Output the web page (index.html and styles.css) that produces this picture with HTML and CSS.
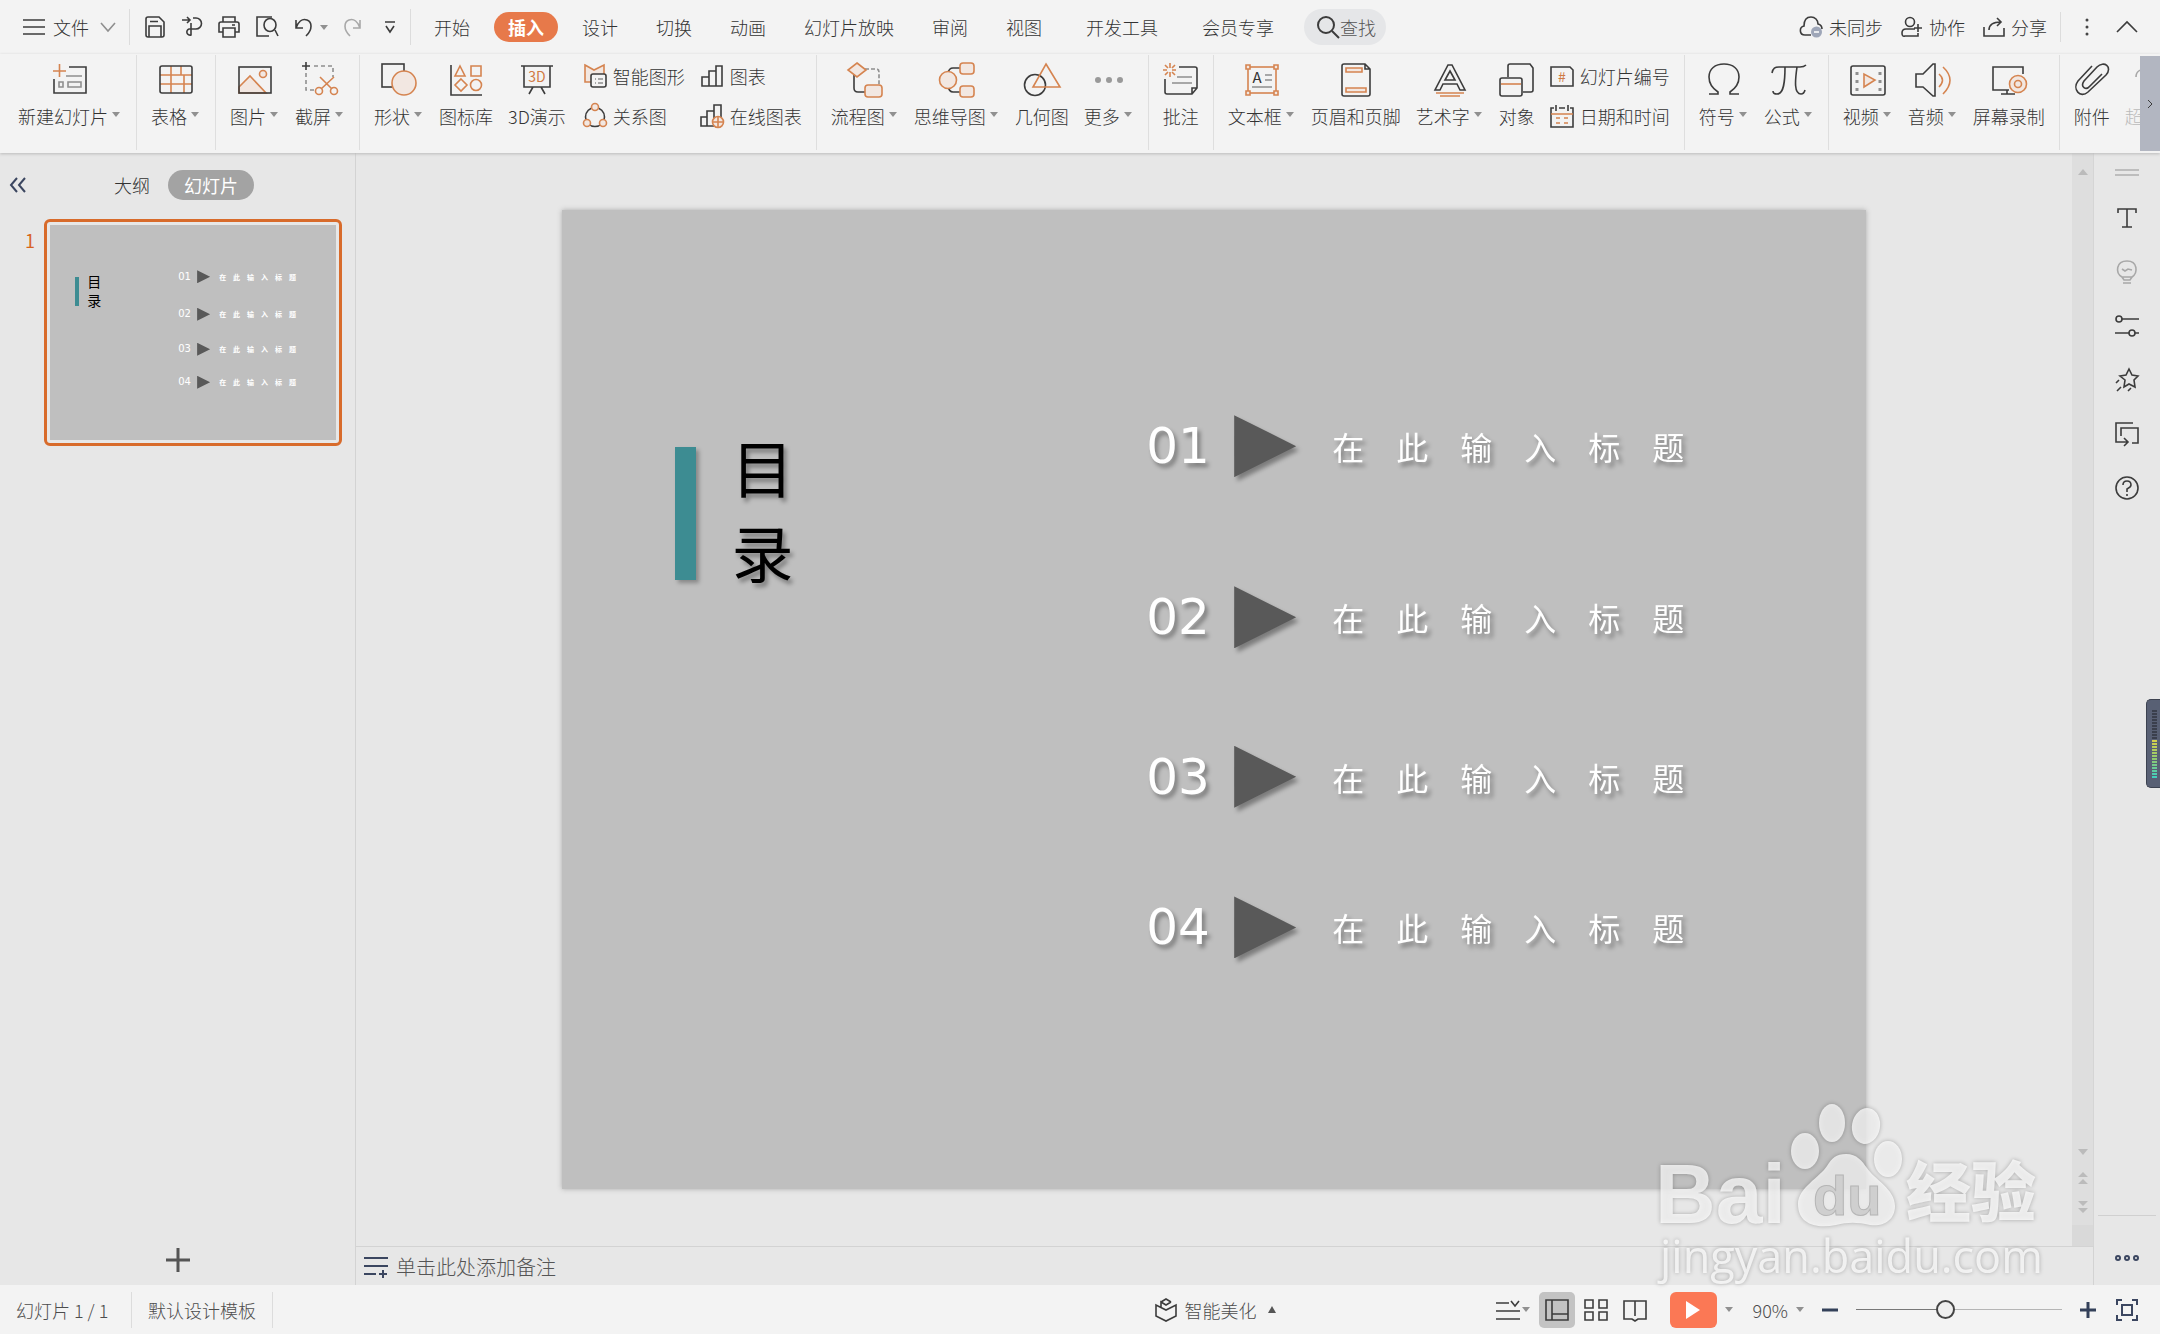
FILE: index.html
```html
<!DOCTYPE html>
<html lang="zh-CN">
<head>
<meta charset="utf-8">
<title>演示文稿</title>
<link rel="stylesheet" href="styles.css">
</head>
<body>
<div class="app">
  <header class="topbar">
    <button class="plain file-menu"><svg width="22" height="18" viewBox="0 0 22 18"><path class="k" d="M0 2H22M0 9H22M0 16H22"/></svg>文件</button>
    <button class="plain file-more" aria-label="更多菜单"><svg width="14" height="10" viewBox="0 0 14 10"><path class="g" d="M0 1 7 9 14 1"/></svg></button>
    <span class="divider"></span>
    <div class="quick">
      <button class="plain" aria-label="保存"><svg width="22" height="22" viewBox="0 0 22 22"><path class="k" d="M4 1H15L20 6V19Q20 21 18 21H4Q2 21 2 19V3Q2 1 4 1ZM5 21V10H17V21M6 5.500H14"/></svg></button>
      <button class="plain" aria-label="输出为PDF"><svg width="22" height="22" viewBox="0 0 22 22"><path class="k" d="M1 4H9M6 1 9 4 6 7M12 2H15A5.500 5.500 0 0 1 15 13H8A3 3 0 1 0 10 19V7"/></svg></button>
      <button class="plain" aria-label="打印"><svg width="22" height="22" viewBox="0 0 22 22"><path class="k" d="M5 6V1H17V6M5 16H1V8Q1 6 3 6H19Q21 6 21 8V16H17M5 12H17V21H5ZM14 9H17"/></svg></button>
      <button class="plain" aria-label="打印预览"><svg width="24" height="22" viewBox="0 0 24 22"><path class="k" d="M14 20H2V1H17M20 14 23 20"/><ellipse class="k" cx="15" cy="9" rx="6" ry="6.500"/></svg></button>
    </div>
    <div class="history">
      <button class="plain undo" aria-label="撤销"><svg width="20" height="20" viewBox="0 0 20 20"><path class="k" d="M2 3V11H9M2 11C4 5 8 1 13 3S19 12 12 19"/></svg><i class="caret"></i></button>
      <button class="plain" aria-label="恢复" disabled><svg width="20" height="20" viewBox="0 0 20 20"><path class="l" d="M18 3V11H11M18 11C16 5 12 1 7 3S1 12 8 19"/></svg></button>
      <button class="plain" aria-label="自定义快速访问"><svg width="12" height="12" viewBox="0 0 12 12"><path class="k" d="M1 1H11M2 5 6 11 10 5"/></svg></button>
    </div>
    <span class="divider"></span>
    <nav class="tabs">
      <button class="tab">开始</button><button class="tab tab-active">插入</button><button class="tab">设计</button><button class="tab">切换</button><button class="tab">动画</button><button class="tab">幻灯片放映</button><button class="tab">审阅</button><button class="tab">视图</button><button class="tab tab-extra">开发工具</button><button class="tab tab-extra">会员专享</button>
    </nav>
    <button class="find"><svg width="24" height="24" viewBox="0 0 24 24"><circle class="k2" cx="10" cy="10" r="8"/><path class="k2" d="M16 16 23 23"/></svg>查找</button>
    <div class="account">
      <button class="plain"><svg width="24" height="24" viewBox="0 0 24 24"><path class="k" d="M12 20H6C0 20 0 12 5 11C5 5 8 2 12 2S19 5 19 9Q23 10 23 14"/><circle cx="17.500" cy="17" r="5.500" fill="#9ea6b8"/><path stroke="#fff" stroke-width="1.500" d="M15 17H20"/></svg>未同步</button>
      <button class="plain"><svg width="22" height="22" viewBox="0 0 22 22"><circle class="k" cx="9" cy="6" r="4.500"/><path class="k" d="M14 13H5Q1 13 1 17T4 20H17V17M13 12H21M17 8V16"/></svg>协作</button>
      <button class="plain"><svg width="22" height="22" viewBox="0 0 22 22"><path class="k" d="M1 11V20H21V12M6 14C6 9 10 6 18 6M14 2 18 6 14 10"/></svg>分享</button>
    </div>
    <span class="divider divider-short"></span>
    <button class="plain dots" aria-label="选项"><svg width="4" height="20" viewBox="0 0 4 20"><g fill="#444"><circle cx="2" cy="3" r="1.500"/><circle cx="2" cy="10" r="1.500"/><circle cx="2" cy="17" r="1.500"/></g></svg></button>
    <button class="plain fold" aria-label="折叠功能区"><svg width="22" height="12" viewBox="0 0 22 12"><path class="k" d="M1 11 11 1 21 11"/></svg></button>
  </header>

  <div class="ribbon">
    <div class="groups">
      <div class="group">
        <button class="tool"><svg viewBox="0 0 36 36"><path class="o" d="M1 10H14M7.500 3V16"/><path class="k" d="M17 6H34V32H2V18"/><path class="g" d="M14 15H30M7 21H11V26H7ZM16 21H29V26H16Z"/></svg><span>新建幻灯片<i class="caret"></i></span></button>
      </div>
      <div class="group">
        <button class="tool"><svg viewBox="0 0 36 36"><path class="o" d="M2 14H34M2 23H34M13 5V32M23 5V14M26 14V32"/><rect class="k" x="2" y="5" width="32" height="27" rx="2"/></svg><span>表格<i class="caret"></i></span></button>
      </div>
      <div class="group">
        <button class="tool"><svg viewBox="0 0 36 36"><path class="of" d="M2 26 13 15 29 32H2Z"/><circle class="of" cx="26" cy="13" r="3.500"/><rect class="k" x="2" y="6" width="32" height="26"/></svg><span>图片<i class="caret"></i></span></button>
        <button class="tool"><svg viewBox="0 0 36 36"><path class="g" stroke-dasharray="4 3" d="M4 12V29H12M12 5H31V16"/><path class="k" d="M0 5H8M4 1V9"/><path class="o" d="M18 16 30 28M32 16 19 28"/><circle class="o" cx="17" cy="30" r="3.500"/><circle class="o" cx="32" cy="30" r="3.500"/></svg><span>截屏<i class="caret"></i></span></button>
      </div>
      <div class="group">
        <button class="tool"><svg viewBox="0 0 36 36"><rect class="k" x="1" y="3" width="22" height="23"/><circle class="of" cx="23" cy="22" r="12"/></svg><span>形状<i class="caret"></i></span></button>
        <button class="tool"><svg viewBox="0 0 36 36"><path class="k" d="M3 4V34H34"/><path class="o" d="M12 5 17 15H7ZM23 5H33V15H23ZM13 18 19 24 13 30 7 24Z"/><circle class="o" cx="28" cy="24" r="5.500"/></svg><span>图标库</span></button>
        <button class="tool"><svg viewBox="0 0 36 36"><path class="k" d="M2 5H34M5 5V26H31V5M14 26 10 33M22 26 26 33"/><text class="o-text" x="18" y="21" text-anchor="middle" font-size="14">3D</text></svg><span>3D演示</span></button>
        <div class="stack">
          <button class="mini"><svg viewBox="0 0 24 26"><path class="of" d="M2 2 11 7 21 2V19H2Z"/><rect class="kf" x="8" y="11" width="15" height="13" rx="2"/><path class="g" d="M12 16H13M15 16H20M12 20H13M15 20H20"/></svg>智能图形</button>
          <button class="mini"><svg viewBox="0 0 24 26"><circle class="k" cx="12" cy="14" r="9.500"/><circle class="of" cx="12" cy="4" r="3.500"/><circle class="of" cx="4" cy="20" r="3.500"/><circle class="of" cx="20" cy="20" r="3.500"/></svg>关系图</button>
        </div>
        <div class="stack">
          <button class="mini"><svg viewBox="0 0 24 26"><path class="k" d="M2 23V14H9V23ZM9 23V8H16V23ZM16 23V3H22V23Z"/></svg>图表</button>
          <button class="mini"><svg viewBox="0 0 24 26"><path class="k" d="M1 23V14H7V23ZM7 23V8H14V23ZM14 14V2H21V14"/><circle class="of" cx="18" cy="19" r="5.500"/><path class="o" d="M12 19H24M18 13V25"/></svg>在线图表</button>
        </div>
      </div>
      <div class="group">
        <button class="tool"><svg viewBox="0 0 36 36"><path class="k" d="M7 14V27Q7 31 11 31H19"/><path class="g" stroke-dasharray="4 2" d="M18 8H29Q32 8 32 11V24"/><path class="of" d="M10 2 19 9 10 16 1 9Z"/><rect class="of" x="18" y="24" width="17" height="12" rx="3"/></svg><span>流程图<i class="caret"></i></span></button>
        <button class="tool"><svg viewBox="0 0 36 36"><path class="k" d="M9 12Q10 7 14 7H22M9 25Q10 31 14 31H22"/><circle class="of" cx="9" cy="19" r="8.500"/><rect class="of" x="21" y="2" width="14" height="11" rx="3"/><rect class="of" x="21" y="25" width="14" height="11" rx="3"/></svg><span>思维导图<i class="caret"></i></span></button>
        <button class="tool"><svg viewBox="0 0 36 36"><circle class="k" cx="11" cy="24" r="10.500"/><path class="o" d="M22 3 36 26H9Z"/></svg><span>几何图</span></button>
        <button class="tool"><svg viewBox="0 0 36 36"><g fill="#999"><circle cx="7" cy="19" r="3"/><circle cx="18" cy="19" r="3"/><circle cx="29" cy="19" r="3"/></g></svg><span>更多<i class="caret"></i></span></button>
      </div>
      <div class="group">
        <button class="tool"><svg viewBox="0 0 36 36"><path class="o" d="M0 9H4M9 9H13M7 2V7M7 11V16M2 4 5 7M12 4 9 7M2 14 5 11M12 14 9 11"/><path class="k" d="M16 6H32Q34 6 34 8V27L29 33H4Q2 33 2 31V18M34 27H29V33"/><path class="g" d="M14 16H29M9 22H29"/></svg><span>批注</span></button>
      </div>
      <div class="group">
        <button class="tool"><svg viewBox="0 0 36 36"><rect class="o" x="4" y="6" width="28" height="26"/><path class="of" d="M2 4H6V8H2ZM30 4H34V8H30ZM2 30H6V34H2ZM30 30H34V34H30Z"/><text class="k-text" x="13" y="22" text-anchor="middle" font-size="15">A</text><path class="g" d="M21 14H28M21 19H28M8 26H28"/></svg><span>文本框<i class="caret"></i></span></button>
        <button class="tool"><svg viewBox="0 0 36 36"><path class="k" d="M6 3H27L32 8V33Q32 35 30 35H6Q4 35 4 33V5Q4 3 6 3ZM27 3V8H32"/><path class="of" d="M8 7H24V11H8ZM8 27H28V31H8Z"/></svg><span>页眉和页脚</span></button>
        <button class="tool"><svg viewBox="0 0 36 36"><path class="k" d="M16 4H20L33 29H28L25 23H11L8 29H3ZM18 10 23 19H13Z"/><path class="o" d="M4 32H32M8 35H28"/></svg><span>艺术字<i class="caret"></i></span></button>
        <button class="tool"><svg viewBox="0 0 36 36"><path class="k" d="M9 16V5Q9 3 11 3H31L34 7V29Q34 31 32 31H24"/><rect class="k" x="1" y="17" width="22" height="18" rx="2"/><path class="o" d="M2 23H22"/></svg><span>对象</span></button>
        <div class="stack">
          <button class="mini"><svg viewBox="0 0 24 26"><path class="k" d="M2 4H20L23 7V23H1V4Z"/><text class="o-text" x="12" y="19" text-anchor="middle" font-size="14">#</text></svg>幻灯片编号</button>
          <button class="mini"><svg viewBox="0 0 24 26"><path class="k" d="M4 5H1V24H23V5H20M9 5H15M6 2V8M18 2V8"/><path class="o" d="M1 11H23M6 15H10M14 15H18M6 20H10M14 20H18"/></svg>日期和时间</button>
        </div>
      </div>
      <div class="group">
        <button class="tool"><svg viewBox="0 0 36 36"><path class="k" d="M3 33H12V31C6 27 3 22 3 16C3 8 9 3 18 3S33 8 33 16C33 22 30 27 24 31V33H33"/></svg><span>符号<i class="caret"></i></span></button>
        <button class="tool"><svg viewBox="0 0 36 36"><path class="k" d="M1 12C2 7 4 6 8 6H29Q33 6 35 4M14 6C14 20 13 33 6 33Q2 33 2 30M26 6C24 20 23 33 30 33Q33 33 34 29"/></svg><span>公式<i class="caret"></i></span></button>
      </div>
      <div class="group">
        <button class="tool"><svg viewBox="0 0 36 36"><rect class="k" x="1" y="5" width="34" height="29" rx="2"/><path class="of" d="M14 13V26L25 19Z"/><path class="film" d="M7 11V30M30 11V30"/></svg><span>视频<i class="caret"></i></span></button>
        <button class="tool"><svg viewBox="0 0 36 36"><path class="k" d="M1 13H8L18 3H20V35H18L8 26H1Z"/><path class="o" d="M24 13Q31 19 24 26M28 6Q42 19 28 33"/></svg><span>音频<i class="caret"></i></span></button>
        <button class="tool"><svg viewBox="0 0 36 36"><path class="k" d="M32 13V6H2V29H18M16 29V33M10 33H24"/><circle class="of" cx="27" cy="23" r="8.500"/><circle class="o" cx="27" cy="23" r="3.500"/></svg><span>屏幕录制</span></button>
      </div>
      <div class="group">
        <button class="tool"><svg viewBox="0 0 36 36"><path class="k" d="M18 5 4 20C-2 28 6 38 14 31L32 14C39 6 30 -1 23 6L10 20C6 26 12 30 16 25L28 13"/></svg><span>附件</span></button>
        <button class="tool tool-faded"><svg viewBox="0 0 36 36"><path class="l" d="M12 8C6 8 2 11 2 16"/></svg><span>超链接</span></button>
      </div>
    </div>
    <button class="ribbon-scroll" aria-label="向右滚动"><svg width="8" height="10" viewBox="0 0 8 10"><path class="k" d="M2 1 6 5 2 9"/></svg></button>
  </div>

  <main class="work">
    <aside class="outline">
      <div class="outline-head">
        <button class="plain" aria-label="收起"><svg width="18" height="16" viewBox="0 0 18 16"><path class="n" d="M8 1 2 8 8 15M16 1 10 8 16 15"/></svg></button>
        <div class="switch"><button class="switch-item">大纲</button><button class="switch-item switch-on">幻灯片</button></div>
      </div>
      <div class="thumb-row">
        <span class="thumb-no">1</span>
        <div class="thumb">
          <div class="slide slide-small">
            <div class="bar"></div>
            <div class="heading">目<br>录</div>
            <div class="entry entry-1"><b>01</b><i class="arrow"></i><span>在　此　输　入　标　题</span></div>
            <div class="entry entry-2"><b>02</b><i class="arrow"></i><span>在　此　输　入　标　题</span></div>
            <div class="entry entry-3"><b>03</b><i class="arrow"></i><span>在　此　输　入　标　题</span></div>
            <div class="entry entry-4"><b>04</b><i class="arrow"></i><span>在　此　输　入　标　题</span></div>
          </div>
        </div>
      </div>
      <button class="plain add" aria-label="新建幻灯片"><svg width="24" height="24" viewBox="0 0 24 24"><path stroke="#555" stroke-width="3" d="M0 12H24M12 0V24"/></svg></button>
    </aside>

    <section class="editor">
      <div class="canvas-row">
        <div class="canvas">
          <div class="slide slide-large">
            <div class="bar"></div>
            <div class="heading">目<br>录</div>
            <div class="entry entry-1"><b>01</b><i class="arrow"></i><span>在　此　输　入　标　题</span></div>
            <div class="entry entry-2"><b>02</b><i class="arrow"></i><span>在　此　输　入　标　题</span></div>
            <div class="entry entry-3"><b>03</b><i class="arrow"></i><span>在　此　输　入　标　题</span></div>
            <div class="entry entry-4"><b>04</b><i class="arrow"></i><span>在　此　输　入　标　题</span></div>
          </div>
        </div>
        <div class="scroll">
          <svg width="10" height="6" viewBox="0 0 10 6"><path d="M0 6 5 0 10 6Z"/></svg>
          <span class="scroll-space"></span>
          <svg width="10" height="6" viewBox="0 0 10 6"><path d="M0 0 5 6 10 0Z"/></svg>
          <svg width="10" height="12" viewBox="0 0 10 12"><path d="M0 5 5 0 10 5ZM0 12 5 7 10 12Z"/></svg>
          <svg width="10" height="12" viewBox="0 0 10 12"><path d="M0 0 5 5 10 0ZM0 7 5 12 10 7Z"/></svg>
        </div>
      </div>
      <label class="notes"><svg width="24" height="22" viewBox="0 0 24 22"><path class="n" d="M0 2H24M0 10H24M0 18H12M15 18H23M19 14V22"/></svg><input type="text" placeholder="单击此处添加备注" aria-label="备注"></label>
    </section>

    <aside class="rail">
      <span class="handle"></span>
      <button class="plain" aria-label="文本"><svg viewBox="0 0 24 24"><path class="k" d="M3 7V3H21V7M12 3V21M7 21H17"/></svg></button>
      <button class="plain" aria-label="灵感"><svg viewBox="0 0 24 24"><path class="l" d="M7 17C0 13 1 1 12 1S23 13 17 17ZM7 17 9 20H15L17 17M8 23H16M7 9 10 11 13 9 17 10"/></svg></button>
      <button class="plain" aria-label="属性"><svg viewBox="0 0 24 24"><circle class="k" cx="4" cy="5" r="3"/><circle class="k" cx="17" cy="19" r="3"/><path class="k" d="M7 5H24M0 19H14M20 19H24"/></svg></button>
      <button class="plain" aria-label="动画"><svg viewBox="0 0 24 24"><path class="k" d="M14 1 17 7 23 8 19 12 20 19 14 16 9 19 10 12 5 8 11 7ZM1 15 4 12M2 23 6 19M13 23 16 20"/></svg></button>
      <button class="plain" aria-label="切换"><svg viewBox="0 0 24 24"><path class="k" d="M18 1H1V20H12M9 16 13 20 9 24M6 14V6H23V21H17"/></svg></button>
      <button class="plain" aria-label="帮助"><svg viewBox="0 0 24 24"><circle class="k" cx="12" cy="12" r="11"/><path class="k" d="M8 9Q8 5 12 5T16 9Q16 11 12 13V16M12 18V20"/></svg></button>
      <span class="rail-line"></span>
      <button class="plain" aria-label="更多"><svg viewBox="0 0 24 24"><circle class="n" cx="3" cy="12" r="2"/><circle class="n" cx="12" cy="12" r="2"/><circle class="n" cx="21" cy="12" r="2"/></svg></button>
    </aside>
  </main>

  <footer class="status">
    <span class="status-cell status-page">幻灯片 1 / 1</span>
    <span class="status-cell">默认设计模板</span>
    <button class="plain beautify"><svg width="22" height="24" viewBox="0 0 22 24"><path class="k" d="M6 4 11 1 16 4M1 7V18L11 23 21 18V7L11 12ZM6 9V4L11 7 16 4"/></svg>智能美化<i class="caret caret-up"></i></button>
    <div class="views">
      <button class="plain view-note" aria-label="备注"><svg width="24" height="22" viewBox="0 0 24 22"><path class="k" d="M0 4H13M0 12H24M0 20H24M15 2 19 7 23 2"/></svg><i class="caret"></i></button>
      <button class="view view-on" aria-label="普通视图"><svg viewBox="0 0 24 24"><path class="k" d="M1 2H23V22H1ZM7 2V22M7 16H23"/></svg></button>
      <button class="view" aria-label="幻灯片浏览"><svg viewBox="0 0 24 24"><path class="k" d="M1 2H9V10H1ZM15 2H23V10H15ZM1 14H9V22H1ZM15 14H23V22H15Z"/></svg></button>
      <button class="view" aria-label="阅读视图"><svg viewBox="0 0 24 24"><path class="k" d="M12 3H1V21H9L12 23 15 21H23V3H12V18"/></svg></button>
      <button class="play" aria-label="放映"><svg width="14" height="18" viewBox="0 0 14 18"><path fill="#fff" d="M0 0 14 9 0 18Z"/></svg></button>
      <button class="plain play-more" aria-label="放映选项"><i class="caret"></i></button>
    </div>
    <div class="zoom">
      <button class="plain zoom-value">90%<i class="caret"></i></button>
      <button class="plain" aria-label="缩小"><svg width="16" height="16" viewBox="0 0 16 16"><path stroke="#334059" stroke-width="3" d="M0 8H16"/></svg></button>
      <input class="zoom-range" type="range" min="0" max="100" value="43" aria-label="缩放">
      <button class="plain" aria-label="放大"><svg width="16" height="16" viewBox="0 0 16 16"><path stroke="#334059" stroke-width="3" d="M0 8H16M8 0V16"/></svg></button>
      <button class="plain fit" aria-label="适应窗口"><svg width="22" height="22" viewBox="0 0 22 22"><path class="n" d="M1 6V1H6M16 1H21V6M21 16V21H16M6 21H1V16M6 6H16V16H6Z"/></svg></button>
    </div>
  </footer>

  <div class="meter"><span class="meter-off"></span><span class="meter-on"></span></div>

  <svg class="watermark" width="400" height="200" viewBox="0 0 400 200">
    <g fill="#fff" fill-opacity=".75">
      <text class="wm-latin" x="5" y="128" font-size="84">Bai</text>
      <ellipse cx="155" cy="56" rx="14" ry="18"/>
      <ellipse cx="182" cy="28" rx="13" ry="19"/>
      <ellipse cx="216" cy="31" rx="14" ry="18" transform="rotate(10 216 31)"/>
      <ellipse cx="238" cy="64" rx="14" ry="18"/>
      <path d="M196 59C207 59 212 66 217 73C224 84 245 94 245 111C245 126 232 132 220 130C207 127 198 127 186 130C166 134 148 129 148 109C148 93 170 82 177 71C182 63 186 59 196 59Z"/>
      <text class="wm-cjk" x="256" y="121" font-size="65">经验</text>
      <text class="wm-url" x="10" y="178" font-size="45">jingyan.baidu.com</text>
    </g>
    <text class="wm-du" x="163" y="120" font-size="56">du</text>
  </svg>
</div>
</body>
</html>
```
FILE: styles.css
```css
* { box-sizing: border-box; }

body {
  margin: 0;
  font-family: "Noto Sans CJK SC", "Noto Sans", sans-serif;
  font-size: 18px;
  line-height: 24px;
  font-weight: 300;
  color: #333;
  background: #e7e7e7;
}

button { font: inherit; color: inherit; cursor: pointer; white-space: nowrap; }

svg { display: block; flex: none; overflow: visible; }

/* icon strokes: dark, heavy, grey, light, navy, orange, filled */
.k, .k2, .g, .l, .n, .o, .of, .kf { fill: none; stroke-width: 1.6; }
.k, .k2, .kf { stroke: #3c3c3c; }
.k2 { stroke-width: 2; }
.g { stroke: #8f8f8f; }
.l { stroke: #a8a8a8; }
.n { stroke: #3b4660; stroke-width: 2; }
.o, .of { stroke: #d58450; }
.of { fill: #f2e7e1; }
.kf { fill: #f3f3f3; }
.film { fill: none; stroke: #8f8f8f; stroke-width: 3; stroke-dasharray: 3 5; }
.o-text { fill: #d07a44; font-weight: 400; }
.k-text { fill: #333; font-weight: 400; }

.plain {
  display: flex;
  align-items: center;
  padding: 0;
  border: 0;
  background: none;
}

.caret {
  display: inline-block;
  flex: none;
  border: 4px solid transparent;
  border-top: 5px solid #909090;
  border-bottom: 0;
}
.caret-up { border-top: 0; border-bottom: 7px solid #555; }

.app {
  display: flex;
  flex-direction: column;
  min-height: 100vh;
  position: relative;
  overflow: hidden;
}

/* top bar */
.topbar {
  display: flex;
  align-items: center;
  height: 54px;
  padding: 0 22px 0 23px;
  background: #f3f3f3;
}
.file-menu { gap: 8px; }
.file-more { margin: 0 14px 0 12px; }
.divider { width: 1px; height: 36px; background: #dcdcdc; }
.divider-short { height: 30px; margin: 0 24px 0 13px; }
.quick { display: flex; gap: 15px; margin: 0 15px 0 14px; }
.history { display: flex; align-items: center; gap: 14px; margin-right: 14px; }
.history .plain:last-child { margin-left: 8px; }
.undo { gap: 6px; }
.tabs { display: flex; gap: 10px; margin-left: 9px; }
.tab {
  height: 30px;
  padding: 0 14px;
  border: 0;
  border-radius: 15px;
  background: none;
}
.tab-active { background: #e7794a; color: #fff; font-weight: 700; }
.tab-extra { margin-left: 6px; }
.find {
  display: flex;
  align-items: center;
  height: 36px;
  margin-left: 16px;
  padding: 0 10px 0 12px;
  border: 0;
  border-radius: 18px;
  background: #e5e6e8;
  color: #555;
}
.account { display: flex; gap: 18px; margin-left: auto; }
.account .plain { gap: 6px; }
.dots { margin-right: 27px; }

/* ribbon */
.ribbon {
  display: flex;
  height: 99px;
  background: #f3f3f3;
  box-shadow: 0 1px 3px #bbb;
  position: relative;
}
.groups {
  display: flex;
  flex: 1;
  min-width: 0;
  overflow: hidden;
  padding-left: 4px;
}
.group {
  display: flex;
  flex: none;
  gap: 15px;
  height: 95px;
  margin-top: 1px;
  padding: 6px 14px 0;
  border-right: 1px solid #dedede;
}
.group:last-child { border-right: 0; }
.tool {
  display: flex;
  flex-direction: column;
  align-items: center;
  justify-content: flex-start;
  gap: 7px;
  padding: 0;
  border: 0;
  background: none;
}
.tool svg { width: 36px; height: 36px; }
.tool span { display: flex; align-items: center; }
.tool .caret { margin: 0 2px 4px 4px; }
.tool-faded { color: #bbb; }
.stack { display: flex; flex-direction: column; gap: 14px; padding-top: 2px; }
.stack:not(:last-child) { margin-left: 2px; }
.mini {
  display: flex;
  align-items: center;
  gap: 6px;
  height: 26px;
  padding: 0;
  border: 0;
  background: none;
}
.mini svg { width: 24px; height: 26px; }
.ribbon-scroll {
  flex: none;
  display: flex;
  align-items: center;
  justify-content: center;
  width: 20px;
  height: 95px;
  margin-top: 2px;
  padding: 0;
  border: 0;
  background: #b2b6c1;
}
.ribbon-scroll .k { stroke-width: 1; }

/* work area */
.work { display: flex; flex: 1; }
.outline {
  display: flex;
  flex-direction: column;
  flex: none;
  width: 356px;
  border-right: 1px solid #d3d3d3;
}
.outline-head {
  display: flex;
  align-items: center;
  height: 48px;
  margin-top: 8px;
  padding-left: 9px;
}
.outline-head > .plain { margin-right: 71px; }
.switch { display: flex; gap: 2px; }
.switch-item {
  height: 30px;
  padding: 0 16px;
  border: 0;
  border-radius: 15px;
  background: none;
}
.switch-on { background: #a3a3a3; color: #fff; font-weight: 400; }
.thumb-row { display: flex; padding: 10px 13px 0 0; }
.thumb-no {
  width: 44px;
  padding: 9px 9px 0 0;
  text-align: right;
  font-weight: 400;
  color: #d8641f;
}
.thumb {
  flex: 1;
  padding: 3px;
  border: 3px solid #d86b2b;
  border-radius: 6px;
}
.add { margin: auto auto 13px; }

.editor { display: flex; flex-direction: column; flex: 1; min-width: 0; }
.canvas-row { display: flex; flex: 1; }
.canvas { display: flex; flex: 1; align-items: center; justify-content: center; }

/* slide: a free canvas, items are placed in percent of its size */
.slide {
  position: relative;
  aspect-ratio: 4 / 3;
  background: #bfbfbf;
  color: #fff;
}
.slide-large { width: 76%; box-shadow: 0 0 5px #aaa; }
.slide .bar {
  position: absolute;
  left: 8.7%;
  top: 24.2%;
  width: 1.6%;
  height: 13.6%;
  background: #3d8c92;
}
.slide .heading {
  position: absolute;
  left: 13%;
  top: 21.8%;
  font-family: KaiTi, STKaiti, "Noto Sans CJK SC", sans-serif;
  font-size: 62px;
  font-weight: 400;
  line-height: 85px;
  color: #000;
}
.entry {
  position: absolute;
  left: 44.8%;
  right: 0;
  display: flex;
  align-items: center;
  height: 62px;
  margin-top: -31px;
  white-space: nowrap;
}
.entry-1 { top: 24.1%; }
.entry-2 { top: 41.6%; }
.entry-3 { top: 57.9%; }
.entry-4 { top: 73.3%; }
.entry b {
  width: 88px;
  font-family: "DejaVu Sans", sans-serif;
  font-size: 50px;
  font-weight: 400;
  line-height: 60px;
}
.entry span {
  margin-left: 36px;
  font-family: KaiTi, STKaiti, "Noto Sans CJK SC", sans-serif;
  font-size: 32px;
  font-weight: 400;
  line-height: 40px;
}
.arrow {
  width: 62px;
  height: 62px;
  background: #595959;
  clip-path: polygon(0 0, 100% 50%, 0 100%);
}
.slide-large .bar { box-shadow: 3px 3px 4px #888; }
.slide-large .heading, .slide-large .entry { filter: drop-shadow(3px 4px 2px rgba(0, 0, 0, .35)); }

.slide-small .heading { font-size: 14px; line-height: 19px; }
.slide-small .entry { height: 14px; margin-top: -7px; }
.slide-small .entry b { width: 19px; font-size: 10px; line-height: 14px; }
.slide-small .entry span { margin-left: 9px; font-size: 7px; font-weight: 700; line-height: 14px; }
.slide-small .arrow { width: 13px; height: 13px; }

.scroll {
  display: flex;
  flex-direction: column;
  align-items: center;
  gap: 17px;
  width: 22px;
  padding: 16px 0 33px;
  border-right: 1px solid #d5d5d5;
  background: linear-gradient(to top, #d9d9d9 21px, #dedede 21px);
}
.scroll path { fill: #bbb; }
.scroll-space { flex: 1; }

.notes {
  display: flex;
  align-items: center;
  gap: 8px;
  height: 39px;
  padding: 2px 0 0 8px;
  border-top: 1px solid #d3d3d3;
  border-right: 1px solid #d3d3d3;
}
.notes input {
  flex: 1;
  padding: 0;
  border: 0;
  outline: 0;
  background: none;
  font: inherit;
  font-size: 20px;
}
.notes input::placeholder { color: #555; opacity: 1; }

.rail {
  display: flex;
  flex-direction: column;
  align-items: center;
  gap: 30px;
  flex: none;
  width: 66px;
  padding: 16px 0 15px;
}
.rail svg { width: 24px; height: 24px; }
.handle { width: 24px; height: 7px; border: solid #bdbdbd; border-width: 2px 0; }
.rail-line { width: 58px; height: 1px; margin-top: auto; background: #d0d0d0; }

/* status bar */
.status {
  display: flex;
  align-items: center;
  height: 49px;
  padding-right: 22px;
  background: #f3f3f3;
  color: #4c4c4c;
}
.status-cell { height: 36px; padding: 6px 16px; border-right: 1px solid #dcdcdc; white-space: nowrap; }
.status-page { min-width: 132px; }
.beautify { gap: 8px; margin-left: auto; }
.beautify .caret { margin-left: 3px; }
.views { display: flex; align-items: center; margin-left: 220px; }
.view-note { gap: 2px; margin-right: 9px; }
.view {
  display: flex;
  align-items: center;
  justify-content: center;
  width: 36px;
  height: 36px;
  margin-right: 3px;
  padding: 0;
  border: 0;
  border-radius: 5px;
  background: none;
}
.view svg { width: 24px; height: 24px; }
.view-on { background: #c3c3c3; }
.play {
  display: flex;
  align-items: center;
  justify-content: center;
  width: 47px;
  height: 36px;
  margin: 0 8px 0 14px;
  padding: 0;
  border: 0;
  border-radius: 6px;
  background: #fb7855;
}
.zoom { display: flex; align-items: center; gap: 18px; margin-left: 20px; }
.zoom-value { gap: 8px; }
.zoom-range {
  appearance: none;
  width: 206px;
  height: 20px;
  margin: 0;
  background: linear-gradient(to right, #777 43%, #b5b5b5 43%) center / 100% 1px no-repeat;
}
.zoom-range::-webkit-slider-thumb {
  appearance: none;
  width: 19px;
  height: 19px;
  border: 2px solid #444;
  border-radius: 50%;
  background: #eee;
}
.fit { margin-left: 2px; }

/* level meter docked to the window edge */
.meter {
  position: absolute;
  right: 0;
  top: 699px;
  width: 14px;
  height: 89px;
  padding: 10px 3px 10px 5px;
  border: solid #3c4250;
  border-width: 1px 0 1px 1px;
  border-radius: 5px 0 0 5px;
  background: #586074;
}
.meter span { display: block; }
.meter-off { height: 30px; background: repeating-linear-gradient(#3a3f4c 0 2px, #586074 2px 3px); }
.meter-on {
  height: 38px;
  background:
    repeating-linear-gradient(transparent 0 2px, #586074 2px 3px),
    linear-gradient(#d6cf4a, #8fca70, #3fd0c0);
}

/* watermark */
.watermark {
  position: absolute;
  right: 110px;
  bottom: 39px;
  pointer-events: none;
  filter: drop-shadow(0 0 2px rgba(0, 0, 0, .35));
}
.wm-latin { font-family: "Liberation Sans", sans-serif; font-weight: 700; }
.wm-cjk { font-family: "Noto Sans CJK SC", sans-serif; font-weight: 900; }
.wm-url { font-family: "Open Sans", "Noto Sans", sans-serif; font-weight: 400; }
.wm-du {
  font-family: "Liberation Sans", sans-serif;
  font-weight: 700;
  fill: #cfcfcf;
  stroke: #b5b5b5;
  stroke-width: 1;
}
```
